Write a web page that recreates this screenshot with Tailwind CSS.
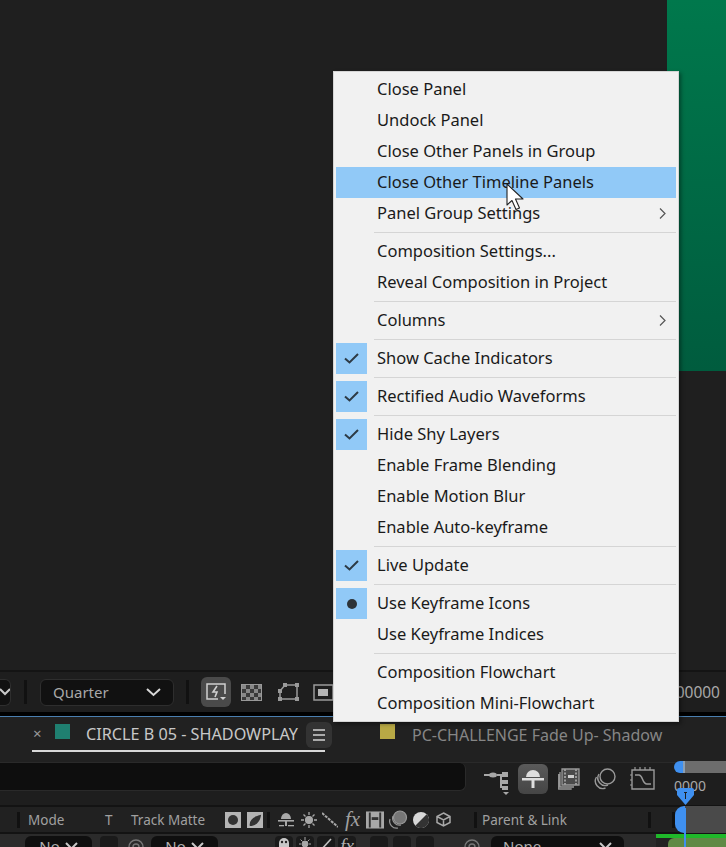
<!DOCTYPE html>
<html lang="en">
<head>
  <meta charset="UTF-8">
  <meta name="viewport" content="width=device-width, initial-scale=1.0">
  <title>Timeline panel menu</title>
  <script src="https://cdn.jsdelivr.net/npm/@tailwindcss/browser@4"></script>
</head>
<body class="bg-[#1e1e1e] font-['Noto_Sans',sans-serif] overflow-hidden">
  <div class="relative w-[726px] h-[847px] overflow-hidden flex flex-col">

    <!-- viewer -->
    <div class="h-[670px] flex justify-end shrink-0 bg-[#1f1f1f]">
      <div class="w-[59px] h-[371px] bg-gradient-to-b from-[#00784c] to-[#005c3e]"></div>
    </div>

    <!-- viewer toolbar -->
    <div class="h-[42px] shrink-0 border-t-2 border-[#141414] bg-[#1e1e1e] flex items-center text-[#a8a8a8]">
      <div class="w-[11px] h-[27px] bg-[#111] border border-[#2e2e2e] border-l-0 rounded-r-md flex items-center justify-end overflow-hidden shrink-0">
        <svg class="w-[12px] h-[8px] shrink-0 -mr-[2px]" viewBox="0 0 12 8" fill="none" stroke="#c8c8c8" stroke-width="2"><path d="M0 1l5 5 5-5"/></svg>
      </div>
      <div class="w-[3px] h-[24px] bg-[#111] ml-[13px] shrink-0"></div>
      <div class="w-[134px] h-[27px] ml-[13px] bg-[#111] border border-[#2e2e2e] rounded-md flex items-center justify-between pl-[12px] pr-[12px] text-[15px] shrink-0">
        <span class="mt-[1px]">Quarter</span>
        <svg class="w-[15px] h-[9px]" viewBox="0 0 15 9" fill="none" stroke="#d8d8d8" stroke-width="2"><path d="M1 1l6.500 6L14 1"/></svg>
      </div>
      <div class="w-[3px] h-[24px] bg-[#111] ml-[12px] shrink-0"></div>
      <div class="w-[30px] h-[30px] ml-[12px] bg-[#4a4a4a] rounded-md flex items-center justify-center shrink-0">
        <svg class="w-[22px] h-[20px]" viewBox="0 0 22 20" fill="none" stroke="#d0d0d0" stroke-width="1.500"><path d="M13 17H2V2h18v10"/><path d="M12 4l-4 6h4l-2 5" stroke-width="1.600"/><path d="M15 15h6l-3 3z" fill="#d0d0d0" stroke="none"/></svg>
      </div>
      <svg class="w-[21px] h-[17px] ml-[10px] shrink-0" viewBox="0 0 21 17" fill="#777" stroke="#999" stroke-width="1"><rect x="0.500" y="0.500" width="20" height="16" fill="#3a3a3a"/><path stroke="none" fill="#888" d="M1 1h4v4H1zM9 1h4v4H9zM17 1h3v4h-3zM5 5h4v4H5zM13 5h4v4h-4zM1 9h4v4H1zM9 9h4v4H9zM17 9h3v4h-3zM5 13h4v3H5zM13 13h4v3h-4z"/></svg>
      <svg class="w-[22px] h-[20px] ml-[15px] shrink-0" viewBox="0 0 22 20" fill="none" stroke="#9a9a9a" stroke-width="1.500"><path d="M3 17L3 9 8 3H20V17Z"/><g fill="#9a9a9a" stroke="none"><rect x="1" y="15" width="4" height="4"/><rect x="1" y="7" width="4" height="4"/><rect x="6" y="1" width="4" height="4"/><rect x="18" y="1" width="4" height="4"/><rect x="18" y="15" width="4" height="4"/></g></svg>
      <svg class="w-[20px] h-[17px] ml-[14px] shrink-0" viewBox="0 0 20 17" fill="none" stroke="#9a9a9a" stroke-width="1.500"><rect x="1" y="1" width="19" height="15"/><rect x="5" y="5" width="10" height="7" fill="#b5b5b5" stroke="none"/></svg>
      <span class="ml-auto mr-[6px] mt-[1px] text-[15.5px] text-[#a8a8a8]">00000</span>
    </div>

    <!-- black band and panel focus line -->
    <div class="h-[4px] bg-black shrink-0"></div>
    <div class="h-[1px] bg-[#4a7fb0] shrink-0"></div>

    <!-- tabs -->
    <div class="h-[45px] shrink-0 bg-[#212121] flex items-start">
      <div class="relative ml-[32px] w-[293px] h-[33px] flex items-center border-b-2 border-[#d8d8d8] shrink-0 box-content">
        <span class="text-[#9a9a9a] text-[15px] w-[23px] pl-[1px] leading-none">×</span>
        <span class="w-[15px] h-[15px] bg-[#1f7f70] -mt-[4px] shrink-0"></span>
        <span class="ml-[16px] mt-[2px] text-[16.200px] text-[#c8c8c8] whitespace-nowrap">CIRCLE B 05 - SHADOWPLAY</span>
        <span class="absolute left-[274px] top-[5px] w-[26px] h-[26px] rounded-md bg-[#333] flex flex-col items-center justify-center gap-[3px]">
          <i class="block w-[12px] h-[2px] bg-[#aaa]"></i><i class="block w-[12px] h-[2px] bg-[#aaa]"></i><i class="block w-[12px] h-[2px] bg-[#aaa]"></i>
        </span>
      </div>
      <div class="ml-[55px] h-[33px] flex items-center shrink-0">
        <span class="w-[15px] h-[15px] bg-[#b8a945] -mt-[4px] shrink-0"></span>
        <span class="ml-[17px] mt-[2px] text-[16px] text-[#868686] whitespace-nowrap">PC-CHALLENGE Fade Up- Shadow</span>
      </div>
    </div>

    <!-- search row -->
    <div class="h-[43px] shrink-0 border-t border-[#2a2a2a] bg-[#1e1e1e] flex items-start">
      <div class="w-[466px] h-[28px] bg-[#0e0e0e] border-r border-b border-[#2a2a2a] rounded-r-md shrink-0"></div>
      <svg class="w-[26px] h-[28px] ml-[18px] mt-[6px] shrink-0" viewBox="0 0 26 28" fill="#a8a8a8"><rect x="0" y="5" width="6" height="2"/><ellipse cx="9" cy="6" rx="4" ry="2.500"/><rect x="13" y="5" width="5" height="2"/><rect x="16" y="5" width="2" height="14"/><rect x="18" y="3" width="6" height="5"/><rect x="18" y="11" width="6" height="4"/><rect x="18" y="17" width="6" height="4"/><path d="M19 23h6l-3 3z"/></svg>
      <div class="w-[30px] h-[30px] ml-[8px] mt-[1px] rounded-md bg-gradient-to-b from-[#5a5a5a] to-[#454545] flex items-center justify-center shrink-0">
        <svg class="w-[24px] h-[20px]" viewBox="0 0 24 20" fill="#dedede"><path d="M5 8a7 7 0 0114 0z"/><rect x="1" y="9" width="22" height="2.500"/><rect x="10.500" y="9" width="3" height="10"/></svg>
      </div>
      <svg class="w-[22px] h-[22px] ml-[10px] mt-[5px] shrink-0" viewBox="0 0 22 22" fill="none" stroke="#999" stroke-width="1.300"><path d="M4 1h17v16H4z" fill="#4a4a4a"/><path d="M2 4v15h14M0.700 6v15h13"/><path d="M7 1v16M18 1v16" stroke-width="2" stroke-dasharray="2 1.500"/><rect x="10" y="7" width="6" height="3" fill="#ccc" stroke="none"/></svg>
      <svg class="w-[22px] h-[22px] ml-[14px] mt-[5px] shrink-0" viewBox="0 0 22 22" fill="none" stroke="#999" stroke-width="1.400"><circle cx="13.500" cy="8.500" r="7.500" fill="#1e1e1e"/><path d="M5 6a7.500 7.500 0 009 11"/><path d="M2.500 9a7.500 7.500 0 009 11"/></svg>
      <svg class="w-[25px] h-[25px] ml-[14px] mt-[3px] shrink-0" viewBox="0 0 25 25" fill="none" stroke="#999" stroke-width="1.400"><path d="M2 4h22v19H2z"/><path d="M5 1v3M10 1v3M15 1v3M20 1v3M0 9h2M0 14h2M0 19h2" stroke-width="1.200"/><path d="M5 9h4c4 0 3 9 8 9h4"/></svg>
      <!-- time ruler -->
      <div class="relative ml-auto w-[52px] h-[43px] -mt-[2px] shrink-0">
        <div class="flex h-[12px]">
          <span class="w-[9px] h-[12px] bg-[#3f90f0] rounded-l-full shrink-0"></span>
          <span class="flex-1 bg-[#6d6d6d] border-l-2 border-[#8a9fb5]"></span>
        </div>
        <span class="block text-[14px] text-[#a8a8a8] leading-none mt-[6px]">0000</span>
        <svg class="absolute left-[3px] top-[27px] w-[17px] h-[18px]" viewBox="0 0 17 18"><path d="M2 0h13a2 2 0 012 2v5L8.500 17 0 7V2a2 2 0 012-2z" fill="#3f90f0"/><path d="M7 4h3v1h-1v6H8V5H7z" fill="#1e1e1e"/></svg>
      </div>
    </div>

    <!-- column header -->
    <div class="h-[29px] shrink-0 border-y-2 border-[#131313] bg-[#212121] flex items-center text-[13.500px] text-[#a0a0a0]">
      <span class="w-[3px] h-[16px] bg-[#111] ml-[17px] shrink-0"></span>
      <span class="ml-[8px] mt-[2px] w-[77px] shrink-0">Mode</span>
      <span class="mt-[2px] w-[26px] shrink-0">T</span>
      <span class="mt-[2px] w-[94px] whitespace-nowrap shrink-0">Track Matte</span>
      <span class="w-[16px] h-[16px] bg-[#b5b5b5] flex items-center justify-center shrink-0"><i class="block w-[10px] h-[10px] rounded-full bg-[#333]"></i></span>
      <svg class="w-[16px] h-[16px] ml-[6px] shrink-0" viewBox="0 0 17 17"><path d="M0 0h17v17H0z" fill="#b5b5b5"/><path d="M3 15c-1-6 3-10 12-12-1 7-5 12-12 12z" fill="#333"/></svg>
      <span class="w-[3px] h-[16px] bg-[#111] ml-[4px] shrink-0"></span>
      <svg class="w-[18px] h-[17px] ml-[7px] shrink-0" viewBox="0 0 18 17" fill="#a8a8a8"><path d="M4 8a5 6 0 0110 0z"/><rect x="1" y="9" width="16" height="1.600"/><rect x="8" y="9" width="2" height="6"/><rect x="2" y="14" width="5" height="1.300"/><rect x="11" y="14" width="6" height="1.300"/></svg>
      <svg class="w-[16px] h-[16px] ml-[6px] shrink-0" viewBox="0 0 16 16" fill="#a8a8a8" stroke="#a8a8a8" stroke-width="1.300"><circle cx="8" cy="8" r="3.400"/><path d="M8 0v3M8 13v3M0 8h3M13 8h3M2.500 2.500l2 2M11.500 11.500l2 2M2.500 13.500l2-2M11.500 4.500l2-2"/></svg>
      <svg class="w-[16px] h-[16px] ml-[5px] shrink-0" viewBox="0 0 16 16" fill="none" stroke="#a8a8a8" stroke-width="2" stroke-dasharray="3 1"><path d="M0 1l16 14"/></svg>
      <span class="ml-[7px] w-[21px] font-['Liberation_Serif',serif] italic text-[21px] leading-none text-[#a0a0a0] shrink-0">fx</span>
      <svg class="w-[18px] h-[18px] shrink-0" viewBox="0 0 19 18" fill="#a8a8a8"><path d="M0 0h19v18H0z"/><path d="M3 1h2v16H3zM14 1h2v16h-2z" fill="#333"/><rect x="6" y="6" width="7" height="3" fill="#333"/></svg>
      <svg class="w-[20px] h-[20px] ml-[4px] shrink-0" viewBox="0 0 20 20" fill="none" stroke="#999" stroke-width="1.200"><circle cx="12" cy="7.500" r="6.500" fill="#777"/><path d="M5 6a7 7 0 008 9"/><path d="M2 9a7 7 0 008 9"/></svg>
      <svg class="w-[16px] h-[16px] ml-[5px] shrink-0" viewBox="0 0 16 16"><circle cx="8" cy="8" r="8" fill="#d8d8d8"/><path d="M13.700 2.300A8 8 0 012.300 13.700z" fill="#333"/></svg>
      <svg class="w-[15px] h-[15px] ml-[7px] shrink-0" viewBox="0 0 15 15" fill="none" stroke="#a8a8a8" stroke-width="1.500"><path d="M7.500 1L14 4.500v6L7.500 14 1 10.500v-6zM1 4.500L7.500 8 14 4.500M7.500 8v6"/></svg>
      <span class="w-[3px] h-[16px] bg-[#111] ml-[23px] shrink-0"></span>
      <span class="ml-[5px] mt-[2px] w-[166px] whitespace-nowrap shrink-0">Parent &amp; Link</span>
      <span class="w-[3px] h-[16px] bg-[#111] shrink-0"></span>
      <span class="w-[3px] h-[16px] bg-[#111] ml-[21px] shrink-0"></span>
      <div class="relative flex-1 h-[27px] flex">
        <span class="w-[10px] bg-[#3f90f0] rounded-l-[9px] shrink-0"></span>
        <span class="flex-1 bg-[#4a4a4a]"></span>
      </div>
    </div>

    <!-- layer row -->
    <div class="relative flex-1 bg-[#2b2b2b] flex items-start pt-[2px] text-[15px] text-[#b0b0b0]">
      <div class="ml-[25px] w-[67px] h-[20px] bg-[#0f0f0f] rounded-t-md flex items-center justify-center gap-[5px] shrink-0"><span>No</span><svg class="w-[13px] h-[8px]" viewBox="0 0 13 8" fill="none" stroke="#c8c8c8" stroke-width="2"><path d="M1 1l5.500 5.500L12 1"/></svg></div>
      <span class="ml-[8px] w-[18px] h-[20px] bg-[#1a1a1a] rounded-t-sm shrink-0"></span>
      <svg class="ml-[10px] mt-[2px] w-[18px] h-[18px] shrink-0" viewBox="0 0 18 18" fill="none" stroke="#777" stroke-width="1.400"><circle cx="8" cy="9" r="7"/><circle cx="8" cy="9" r="3"/></svg>
      <div class="ml-[5px] w-[67px] h-[20px] bg-[#0f0f0f] rounded-t-md flex items-center justify-center gap-[5px] shrink-0"><span>No</span><svg class="w-[13px] h-[8px]" viewBox="0 0 13 8" fill="none" stroke="#c8c8c8" stroke-width="2"><path d="M1 1l5.500 5.500L12 1"/></svg></div>
      <span class="ml-[57px] w-[18px] h-[20px] bg-[#1a1a1a] rounded-t-sm flex justify-center shrink-0"><svg class="w-[14px] h-[14px]" viewBox="0 0 14 14" fill="#c8c8c8"><path d="M2 14V7a5 5 0 0110 0v7z"/><circle cx="5" cy="6" r="1.200" fill="#222"/><circle cx="9" cy="6" r="1.200" fill="#222"/></svg></span>
      <span class="ml-[3px] w-[18px] h-[20px] bg-[#1a1a1a] rounded-t-sm flex justify-center shrink-0"><svg class="w-[14px] h-[14px]" viewBox="0 0 14 14" fill="#a8a8a8" stroke="#a8a8a8"><circle cx="7" cy="8" r="3"/><path d="M7 1v3M1 8h2M11 8h2M2.500 3.500l2 2M11.500 3.500l-2 2"/></svg></span>
      <span class="ml-[3px] w-[18px] h-[20px] bg-[#1a1a1a] rounded-t-sm flex justify-center shrink-0"><svg class="w-[14px] h-[14px]" viewBox="0 0 14 14" stroke="#c0c0c0" stroke-width="1.600"><path d="M2 14L12 3"/></svg></span>
      <span class="ml-[3px] w-[18px] h-[20px] bg-[#1a1a1a] rounded-t-sm font-['Liberation_Serif',serif] italic text-[19px] leading-none text-center shrink-0">fx</span>
      <span class="ml-[14px] w-[18px] h-[20px] bg-[#1a1a1a] rounded-t-sm shrink-0"></span>
      <span class="ml-[5px] w-[18px] h-[20px] bg-[#1a1a1a] rounded-t-sm shrink-0"></span>
      <span class="ml-[5px] w-[18px] h-[20px] bg-[#1a1a1a] rounded-t-sm shrink-0"></span>
      <svg class="ml-[30px] mt-[2px] w-[18px] h-[18px] shrink-0" viewBox="0 0 18 18" fill="none" stroke="#777" stroke-width="1.400"><circle cx="8" cy="9" r="7"/><circle cx="8" cy="9" r="3"/></svg>
      <div class="ml-[9px] w-[133px] h-[20px] bg-[#0f0f0f] rounded-t-md flex items-center justify-between pl-[12px] pr-[12px] shrink-0"><span>None</span><svg class="w-[13px] h-[8px]" viewBox="0 0 13 8" fill="none" stroke="#c8c8c8" stroke-width="2"><path d="M1 1l5.500 5.500L12 1"/></svg></div>
      <div class="ml-[32px] flex-1 -mt-[2px] h-[20px] bg-[#222]">
        <div class="h-[4px] bg-[#1fb82a]"></div>
        <div class="ml-[12px] h-[16px] bg-[#5f8a45] rounded-tl-[6px]"></div>
      </div>
      <!-- playhead line -->
      <span class="absolute left-[684px] top-[-26px] w-[2px] h-[50px] bg-[#3f90f0]"></span>
    </div>

    <!-- context menu -->
    <div class="absolute left-[333px] top-[71px] w-[346px] h-[651px] bg-[#f1f1f1] border border-[#d5d5d5] pt-[2px] px-[2px] text-[16.500px] text-[#1a1a1a] shadow-[2px_2px_4px_rgba(0,0,0,0.4)]">
      <div class="h-[31px] pl-[41px] flex items-center">Close Panel</div>
      <div class="h-[31px] pl-[41px] flex items-center">Undock Panel</div>
      <div class="h-[31px] pl-[41px] flex items-center">Close Other Panels in Group</div>
      <div class="h-[31px] pl-[41px] flex items-center bg-[#91c9f7]">Close Other Timeline Panels</div>
      <div class="h-[31px] pl-[41px] pr-[10px] flex items-center justify-between">Panel Group Settings
        <svg class="w-[7px] h-[11px]" viewBox="0 0 7 11" fill="none" stroke="#555" stroke-width="1.200"><path d="M1 .5l5 5-5 5"/></svg>
      </div>
      <div class="h-[7px] pl-[38px] flex items-center"><span class="block w-full h-[1px] bg-[#d5d5d5]"></span></div>
      <div class="h-[31px] pl-[41px] flex items-center">Composition Settings...</div>
      <div class="h-[31px] pl-[41px] flex items-center">Reveal Composition in Project</div>
      <div class="h-[7px] pl-[38px] flex items-center"><span class="block w-full h-[1px] bg-[#d5d5d5]"></span></div>
      <div class="h-[31px] pl-[41px] pr-[10px] flex items-center justify-between">Columns
        <svg class="w-[7px] h-[11px]" viewBox="0 0 7 11" fill="none" stroke="#555" stroke-width="1.200"><path d="M1 .5l5 5-5 5"/></svg>
      </div>
      <div class="h-[7px] pl-[38px] flex items-center"><span class="block w-full h-[1px] bg-[#d5d5d5]"></span></div>
      <div class="h-[31px] flex items-center"><span class="w-[31px] h-[31px] bg-[#91c9f7] flex items-center justify-center mr-[10px]"><svg class="w-[15px] h-[11px]" viewBox="0 0 15 11" fill="none" stroke="#2d3a45" stroke-width="2"><path d="M1 5.500l4.500 4L14 1"/></svg></span>Show Cache Indicators</div>
      <div class="h-[7px] pl-[38px] flex items-center"><span class="block w-full h-[1px] bg-[#d5d5d5]"></span></div>
      <div class="h-[31px] flex items-center"><span class="w-[31px] h-[31px] bg-[#91c9f7] flex items-center justify-center mr-[10px]"><svg class="w-[15px] h-[11px]" viewBox="0 0 15 11" fill="none" stroke="#2d3a45" stroke-width="2"><path d="M1 5.500l4.500 4L14 1"/></svg></span>Rectified Audio Waveforms</div>
      <div class="h-[7px] pl-[38px] flex items-center"><span class="block w-full h-[1px] bg-[#d5d5d5]"></span></div>
      <div class="h-[31px] flex items-center"><span class="w-[31px] h-[31px] bg-[#91c9f7] flex items-center justify-center mr-[10px]"><svg class="w-[15px] h-[11px]" viewBox="0 0 15 11" fill="none" stroke="#2d3a45" stroke-width="2"><path d="M1 5.500l4.500 4L14 1"/></svg></span>Hide Shy Layers</div>
      <div class="h-[31px] pl-[41px] flex items-center">Enable Frame Blending</div>
      <div class="h-[31px] pl-[41px] flex items-center">Enable Motion Blur</div>
      <div class="h-[31px] pl-[41px] flex items-center">Enable Auto-keyframe</div>
      <div class="h-[7px] pl-[38px] flex items-center"><span class="block w-full h-[1px] bg-[#d5d5d5]"></span></div>
      <div class="h-[31px] flex items-center"><span class="w-[31px] h-[31px] bg-[#91c9f7] flex items-center justify-center mr-[10px]"><svg class="w-[15px] h-[11px]" viewBox="0 0 15 11" fill="none" stroke="#2d3a45" stroke-width="2"><path d="M1 5.500l4.500 4L14 1"/></svg></span>Live Update</div>
      <div class="h-[7px] pl-[38px] flex items-center"><span class="block w-full h-[1px] bg-[#d5d5d5]"></span></div>
      <div class="h-[31px] flex items-center"><span class="w-[31px] h-[31px] bg-[#91c9f7] flex items-center justify-center mr-[10px]"><i class="block w-[10px] h-[10px] rounded-full bg-[#2d3338]"></i></span>Use Keyframe Icons</div>
      <div class="h-[31px] pl-[41px] flex items-center">Use Keyframe Indices</div>
      <div class="h-[7px] pl-[38px] flex items-center"><span class="block w-full h-[1px] bg-[#d5d5d5]"></span></div>
      <div class="h-[31px] pl-[41px] flex items-center">Composition Flowchart</div>
      <div class="h-[31px] pl-[41px] flex items-center">Composition Mini-Flowchart</div>
    </div>

    <!-- mouse pointer -->
    <svg class="absolute left-[506px] top-[183px] w-[19px] h-[29px]" viewBox="0 0 19 29"><path d="M1 1v21l5-4.500 4 9 3.500-1.500-4-9H17z" fill="#fff" stroke="#222" stroke-width="1.100" stroke-linejoin="round"/></svg>
  </div>
</body>
</html>
